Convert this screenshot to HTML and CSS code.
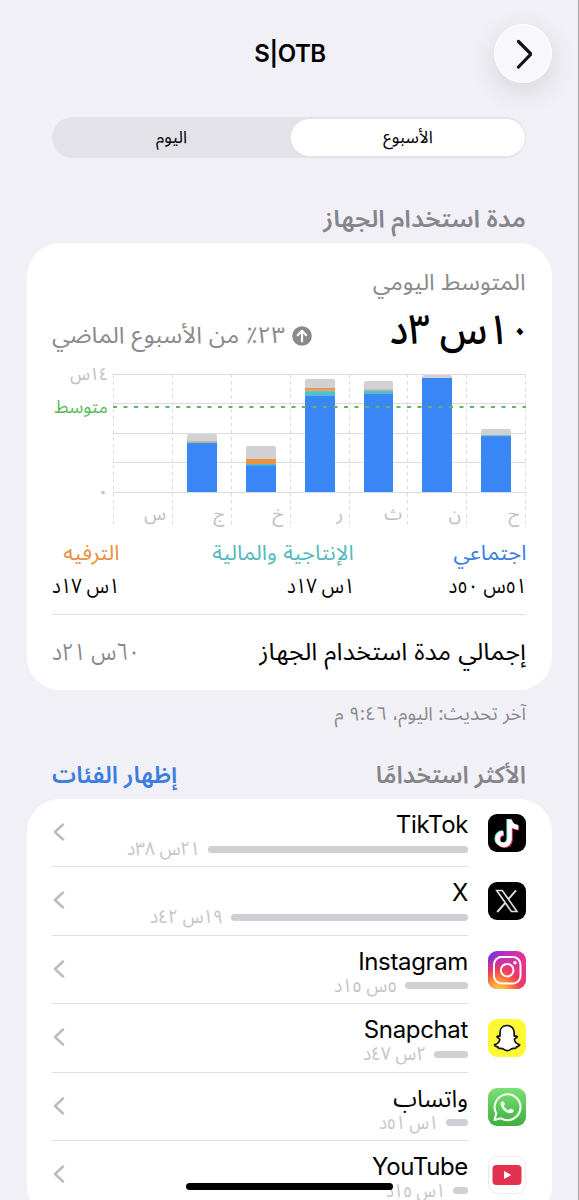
FILE: index.html
```
<!DOCTYPE html>
<html lang="ar" dir="rtl">
	<head>
		<meta charset="UTF-8">
		<title>S|OTB</title>
		<link rel="stylesheet" href="styles.css">
	</head>
	<body>
		<div class="screen">
			<div class="header">
				<a class="back">
					<svg width="18" height="30" viewBox="0 0 18 30"><path d="M4.500 2.500L17 15L4.500 28" fill="none" stroke="#111" stroke-width="3.200" stroke-linecap="round" stroke-linejoin="round"/></svg>
				</a>
				<h1 class="title" dir="ltr">S|OTB</h1>
			</div>

			<div class="tabs">
				<a class="tab on">الأسبوع</a>
				<a class="tab">اليوم</a>
			</div>

			<h2 class="usage-title"><span class="t">مدة استخدام الجهاز</span></h2>

			<div class="card usage">
				<p class="avg-label"><span class="t">المتوسط اليومي</span></p>
				<div class="avg">
					<b class="avg-num"><span class="num">١٠س ٣د</span></b>
					<div class="change">
						<svg width="20" height="20" viewBox="0 0 20 20"><circle cx="10" cy="10" r="9.8" fill="#8a8a8e"/><path d="M10 15.5V5M5.700 9.200L10 4.800L14.300 9.200" fill="none" stroke="#fff" stroke-width="2.200" stroke-linecap="round" stroke-linejoin="round"/></svg>
						<span class="t left">٢٣٪ من الأسبوع الماضي</span>
					</div>
				</div>

				<div class="chart">
					<svg class="plot" width="413" height="152" viewBox="0 0 413 152">
						<g stroke="#dcdce0" stroke-width="1">
							<path d="M0 1.5H413M0 30.5H413M0 60.5H413M0 89.5H413M0 119.5H413"/>
							<path d="M.5 1V152M59.5 1V152M118.5 1V152M177.5 1V152M236.5 1V152M294.5 1V152M353.5 1V152M412.5 1V152" stroke-dasharray="3.5 3.5"/>
						</g>
						<g fill="#d0d0d5">
							<path d="M74 119V63q0-2 2-2h26q2 0 2 2V119z"/>
							<path d="M133 119V75q0-2 2-2h26q2 0 2 2V119z"/>
							<path d="M192 119V8q0-2 2-2h26q2 0 2 2V119z"/>
							<path d="M251 119V10q0-2 2-2h25q2 0 2 2V119z"/>
							<path d="M309 119V4q0-2 2-2h26q2 0 2 2V119z"/>
							<path d="M368 119V58q0-2 2-2h26q2 0 2 2V119z"/>
						</g>
						<g fill="#3a86f7">
							<path d="M74 70h30v49H74zM133 92h30v27h-30zM192 23h30v96h-30zM251 21h29v98h-29zM309 5h30v114h-30zM368 63h30v56h-30z"/>
						</g>
						<g fill="#4fbfcd">
							<path d="M74 69.3h30v1H74zM133 91h30v1.5h-30zM192 18h30v5h-30zM251 17.5h29v3.5h-29zM368 62.3h30v1h-30z"/>
						</g>
						<path fill="#c3ae87" d="M74 68.2h30v1.2H74zM192 16.5h30v2h-30zM251 16.5h29v1.2h-29z"/>
						<path fill="#ec9440" d="M133 86h30v5h-30zM192 15h30v1.8h-30z"/>
						<path d="M0 34H413" stroke="#5cb85f" stroke-width="2" stroke-dasharray="4 6.5"/>
					</svg>
					<div class="scale">
						<span class="max"><span class="num">١٤س</span></span>
						<span class="mid">متوسط</span>
						<span class="zero">٠</span>
					</div>
				</div>
				<div class="days">
					<span>ح</span><span>ن</span><span>ث</span><span>ر</span><span>خ</span><span>ج</span><span>س</span>
				</div>

				<div class="cats">
					<div class="cat">
						<p class="cat-name blue"><span class="t">اجتماعي</span></p>
						<p class="cat-time"><span class="num">٥١س ٥٠د</span></p>
					</div>
					<div class="cat">
						<p class="cat-name teal"><span class="t">الإنتاجية والمالية</span></p>
						<p class="cat-time"><span class="num">١س ١٧د</span></p>
					</div>
					<div class="cat">
						<p class="cat-name orange"><span class="t">الترفيه</span></p>
						<p class="cat-time"><span class="num">١س ١٧د</span></p>
					</div>
				</div>

				<div class="total">
					<span class="t">إجمالي مدة استخدام الجهاز</span>
					<span class="total-time"><span class="num left">٦٠س ٢١د</span></span>
				</div>
			</div>

			<p class="update">آخر تحديث: اليوم، ٩:٤٦ م</p>

			<div class="most">
				<h2 class="most-title">الأكثر استخدامًا</h2>
				<a class="show">إظهار الفئات</a>
			</div>

			<ul class="card apps">
				<li class="app">
					<svg class="icon" viewBox="0 0 38 38">
						<rect width="38" height="38" rx="9" fill="#000"/>
						<g fill="none" stroke-width="4.4">
							<path d="M20.6 5V24.6A6 6 0 1 1 14.6 18.4M20.6 5.5Q22 12.4 29.5 12.8" stroke="#5fe9e5"/>
							<path d="M22.6 6.5V26A6 6 0 1 1 16 19.8M22.6 7Q24 13.9 31 14.2" stroke="#f2385a"/>
							<path d="M21.6 5.5V25.2A6 6 0 1 1 15.3 19M21.6 6Q23 13 30.2 13.4" stroke="#fff"/>
						</g>
					</svg>
					<div class="app-row">
						<div class="app-main">
							<p class="app-name">TikTok</p>
							<div class="app-use"><i class="bar" style="width:260px"></i><span class="num">٢١س ٣٨د</span></div>
						</div>
						<svg class="arrow" viewBox="0 0 12 18"><path d="M10 1.500L2 9L10 16.500"/></svg>
					</div>
				</li>
				<li class="app">
					<svg class="icon" viewBox="0 0 38 38">
						<rect width="38" height="38" rx="9" fill="#000"/>
						<path d="M8.7 8.5H14.3L29 29.5H23.4z" fill="none" stroke="#ddd" stroke-width="1.6"/>
						<path d="M28 8.3L20.4 17.2M17.3 20.8L9.2 30" stroke="#ddd" stroke-width="2"/>
					</svg>
					<div class="app-row">
						<div class="app-main">
							<p class="app-name">X</p>
							<div class="app-use"><i class="bar" style="width:237px"></i><span class="num">١٩س ٤٢د</span></div>
						</div>
						<svg class="arrow" viewBox="0 0 12 18"><path d="M10 1.500L2 9L10 16.500"/></svg>
					</div>
				</li>
				<li class="app">
					<svg class="icon" viewBox="0 0 38 38">
						<defs>
							<linearGradient id="ig" x1="0" y1="0" x2="1" y2=".3"><stop offset="0" stop-color="#5b35e8"/><stop offset=".45" stop-color="#c42cc0"/><stop offset="1" stop-color="#ea3488"/></linearGradient>
							<radialGradient id="ig2" cx=".28" cy="1.05" r=".95"><stop offset="0" stop-color="#ffd44a"/><stop offset=".3" stop-color="#fb9235"/><stop offset=".6" stop-color="#f63c50" stop-opacity=".9"/><stop offset="1" stop-color="#e02f8f" stop-opacity="0"/></radialGradient>
						</defs>
						<rect width="38" height="38" rx="9" fill="url(#ig)"/>
						<rect width="38" height="38" rx="9" fill="url(#ig2)"/>
						<g fill="none" stroke="#fff" stroke-width="2"><rect x="6" y="6" width="26.5" height="26.5" rx="7.5"/><circle cx="19.2" cy="19.2" r="6.3"/></g>
						<circle cx="27" cy="11.8" r="1.7" fill="#fff"/>
					</svg>
					<div class="app-row">
						<div class="app-main">
							<p class="app-name">Instagram</p>
							<div class="app-use"><i class="bar" style="width:63px"></i><span class="num">٥س ١٥د</span></div>
						</div>
						<svg class="arrow" viewBox="0 0 12 18"><path d="M10 1.500L2 9L10 16.500"/></svg>
					</div>
				</li>
				<li class="app">
					<svg class="icon" viewBox="0 0 38 38">
						<rect width="38" height="38" rx="9" fill="#fdf935"/>
						<path d="M19 6.5C14.500 6.500 12 9.600 12 13.500V17C10.800 17.500 9.500 16.700 9 17.600C8.600 18.800 11.500 19.200 11.800 20.500C11.500 23 9 25 6.500 25.800C6.800 27.500 9 27.400 10 28C10.300 28.800 10.300 29.300 11 29.500C12.800 29.300 14 29 15.500 30.200C18 32.200 20.500 32.200 23 30.200C24.500 29 25.500 29.300 27.200 29.500C28 29.300 28 28.800 28.300 28C29.300 27.400 31.300 27.500 31.700 25.800C29.200 25 26.700 23 26.400 20.500C26.700 19.200 29.600 18.800 29.200 17.600C28.700 16.700 27.400 17.500 26.200 17V13.500C26.200 9.600 23.500 6.500 19 6.500z" fill="#fff" stroke="#111" stroke-width="1.700" stroke-linejoin="round"/>
					</svg>
					<div class="app-row">
						<div class="app-main">
							<p class="app-name">Snapchat</p>
							<div class="app-use"><i class="bar" style="width:34px"></i><span class="num">٢س ٤٧د</span></div>
						</div>
						<svg class="arrow" viewBox="0 0 12 18"><path d="M10 1.500L2 9L10 16.500"/></svg>
					</div>
				</li>
				<li class="app">
					<svg class="icon" viewBox="0 0 38 38">
						<defs><linearGradient id="wa" x1="0" y1="0" x2="0" y2="1"><stop offset="0" stop-color="#7be077"/><stop offset="1" stop-color="#3fae3e"/></linearGradient></defs>
						<rect width="38" height="38" rx="9" fill="url(#wa)"/>
						<path d="M6.500 32L8.300 25.500A12.900 12.900 0 1 1 13 30.300z" fill="none" stroke="#f3fff0" stroke-width="2.100" stroke-linejoin="round"/>
						<path d="M14.800 13.200C13.600 13 12.300 14.400 12.600 16.400C13.300 20.600 18 25 22 25.300C24.200 25.400 26 24 25.800 22.300C25.600 21.800 23 20.500 22.400 20.600C21.600 21 21.200 22.300 20.500 22.200C18.600 21.500 16.600 19.600 15.900 17.900C16 17.200 17 16.600 16.900 15.900C16.600 15 15.700 13.400 14.800 13.200z" fill="#f3fff0"/>
					</svg>
					<div class="app-row">
						<div class="app-main">
							<p class="app-name">واتساب</p>
							<div class="app-use tight"><i class="bar" style="width:22px"></i><span class="num">١س ٥١د</span></div>
						</div>
						<svg class="arrow" viewBox="0 0 12 18"><path d="M10 1.500L2 9L10 16.500"/></svg>
					</div>
				</li>
				<li class="app">
					<svg class="icon" viewBox="0 0 38 38">
						<rect x=".5" y=".5" width="37" height="37" rx="9" fill="#fff" stroke="#e9ebec"/>
						<rect x="4.500" y="9" width="29" height="20" rx="4" fill="#e33250"/>
						<path d="M16 15L23.300 19L16 23z" fill="#fff"/>
					</svg>
					<div class="app-row">
						<div class="app-main">
							<p class="app-name">YouTube</p>
							<div class="app-use tight"><i class="bar" style="width:15px"></i><span class="num">١س ١٥د</span></div>
						</div>
						<svg class="arrow" viewBox="0 0 12 18"><path d="M10 1.500L2 9L10 16.500"/></svg>
					</div>
				</li>
			</ul>
			<div class="home"></div>
		</div>
	</body>
</html>
```
FILE: styles.css
```
body,h1,h2,ul,p{
	margin:0;
	padding:0;
}
li{
	list-style:none;
}
body{
	font-family:Inter, "Noto Sans Arabic", "DejaVu Sans", sans-serif;
	background:#f1f0f6;
}
.screen{
	width:579px;
	height:1200px;
	box-sizing:border-box;
	border-right:1px solid #a9a9ae;
	padding:0 26px 0 27px;
	overflow:hidden;
	position:relative;
}
.t,.num{
	display:inline-block;
	white-space:nowrap;
	transform:scaleX(1.05);
	transform-origin:right center;
}
.num{
	transform:scaleX(.9);
}
.t.left,.num.left{
	transform-origin:left center;
}
.header{
	height:117px;
	display:flex;
	align-items:flex-start;
}
.back{
	width:58px;
	height:59px;
	margin-top:24px;
	box-sizing:border-box;
	border:1px solid #fff;
	border-radius:50%;
	background:#f8f8fa;
	box-shadow:0 8px 28px rgba(0,0,0,.12);
	display:flex;
	align-items:center;
	justify-content:center;
}
.title{
	flex:1;
	margin-top:39px;
	padding-left:59px;
	height:30px;
	line-height:30px;
	font-size:24px;
	font-weight:600;
	letter-spacing:-.4px;
	text-align:center;
}
.tabs{
	height:41px;
	margin:0 26px 0 25px;
	padding:2px 1px 2px 2px;
	box-sizing:border-box;
	border-radius:21px;
	background:#e3e2e8;
	display:flex;
}
.tab{
	flex:1;
	padding-right:2px;
	border-radius:19px;
	line-height:36px;
	font-size:17px;
	text-align:center;
}
.tab.on{
	flex:none;
	width:234px;
	padding:0;
	background:#fff;
}
.usage-title{
	margin:43px 26px 0 0;
	height:42px;
	line-height:36px;
	font-size:24px;
	font-weight:600;
	color:#85858a;
}
.card{
	border-radius:33px;
	background:#fff;
	padding:0 26px 0 25px;
}
.usage{
	height:447px;
	box-sizing:border-box;
}
.avg-label{
	padding-top:20px;
	height:36px;
	line-height:38px;
	font-size:22.700px;
	color:#8a8a8e;
}
.avg{
	height:74px;
	display:flex;
	justify-content:space-between;
}
.avg-num{
	margin-right:-5px;
	line-height:60px;
	font-size:42px;
	font-weight:500;
}
.change{
	height:73px;
	display:flex;
	align-items:center;
	gap:18px;
	font-size:23px;
	color:#8a8a8e;
}
.chart{
	height:120px;
	display:flex;
}
.plot{
	flex:none;
}
.scale{
	flex:1;
	height:152px;
	margin-top:-11px;
	padding-right:5px;
	font-size:18px;
	line-height:24px;
	color:#bdbdc2;
}
.scale > span{
	display:block;
	height:24px;
}
.scale .mid{
	margin-top:9px;
	color:#5cb85f;
}
.scale .zero{
	margin-top:61px;
	font-weight:700;
}
.days{
	width:413px;
	height:44px;
	display:flex;
	font-size:18px;
	line-height:41px;
	color:#bdbdc2;
}
.days span{
	flex:1;
	padding-right:6px;
}
.cats{
	height:77px;
	border-bottom:1px solid #dfdfe3;
	display:grid;
	grid-template-columns:172px 235px 1fr;
}
.cat-name,.cat-time{
	height:33px;
	line-height:32px;
	font-size:21px;
	white-space:nowrap;
}
.cat-time .num{
	transform:scaleX(.870);
}
.blue{
	color:#3a7ee0;
}
.teal{
	color:#55b9c0;
}
.orange{
	color:#e9923f;
}
.total{
	height:74px;
	display:flex;
	justify-content:space-between;
	line-height:73px;
	font-size:24px;
}
.total-time{
	color:#8a8a8e;
}
.total-time .num{
	transform:scaleX(.860);
}
.update{
	margin:11px 26px 0 0;
	height:27px;
	line-height:26px;
	font-size:18.900px;
	color:#8a8a8e;
}
.most{
	height:71px;
	padding:0 26px 0 25px;
	display:flex;
	justify-content:space-between;
	line-height:94px;
	font-size:24px;
	font-weight:600;
}
.most-title{
	font-size:24px;
	font-weight:600;
	color:#85858a;
}
.show{
	color:#3a7ee0;
}
.apps{
	height:420px;
}
.app{
	height:68.400px;
	display:flex;
}
.icon{
	flex:none;
	width:38px;
	height:38px;
	margin-top:15px;
}
.app-row{
	flex:1;
	height:67.400px;
	margin-right:20px;
	border-bottom:1px solid #dfdfe3;
	display:flex;
}
.app-main{
	flex:1;
}
.app-name{
	height:40px;
	padding-top:3px;
	line-height:46px;
	font-size:24px;
	letter-spacing:-.350px;
	box-sizing:border-box;
}
.app-use{
	height:20px;
	display:flex;
	align-items:center;
	gap:8px;
	font-size:19px;
	color:#c3c3c7;
}
.app-use.tight .num{
	transform:scaleX(.840);
}
.bar{
	height:7px;
	border-radius:4px;
	background:#cfcfd4;
}
.arrow{
	width:12px;
	height:18px;
	margin:24px 0 0 1px;
	fill:none;
	stroke:#bcbcc0;
	stroke-width:2.500;
	stroke-linecap:round;
	stroke-linejoin:round;
}
.home{
	position:absolute;
	left:186px;
	bottom:10px;
	width:207px;
	height:7px;
	border-radius:4px;
	background:#000;
}
```
